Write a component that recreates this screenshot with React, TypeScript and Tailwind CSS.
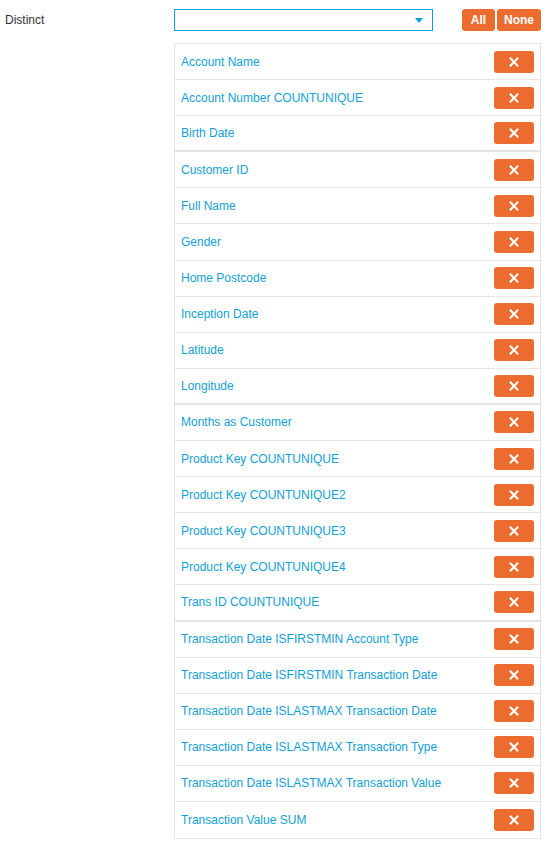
const fields = [
  'Account Name',
  'Account Number COUNTUNIQUE',
  'Birth Date',
  'Customer ID',
  'Full Name',
  'Gender',
  'Home Postcode',
  'Inception Date',
  'Latitude',
  'Longitude',
  'Months as Customer',
  'Product Key COUNTUNIQUE',
  'Product Key COUNTUNIQUE2',
  'Product Key COUNTUNIQUE3',
  'Product Key COUNTUNIQUE4',
  'Trans ID COUNTUNIQUE',
  'Transaction Date ISFIRSTMIN Account Type',
  'Transaction Date ISFIRSTMIN Transaction Date',
  'Transaction Date ISLASTMAX Transaction Date',
  'Transaction Date ISLASTMAX Transaction Type',
  'Transaction Date ISLASTMAX Transaction Value',
  'Transaction Value SUM',
]

// rows followed by a heavier divider
const groupEnds = [2, 9, 15]

function RemoveIcon() {
  return (
    <svg width="10" height="10" viewBox="0 0 10 10" fill="none">
      <path d="M1.6 1.6L8.4 8.4M8.4 1.6L1.6 8.4" stroke="white" strokeWidth="2.1" strokeLinecap="square" />
    </svg>
  )
}

export default function App() {
  return (
    <div className="w-[551px] h-[846px] bg-white font-[family-name:Liberation_Sans,Arial,sans-serif] text-[12px]">
      <div className="flex pt-[9px]">
        <div className="w-[174px] shrink-0 pl-[5px] pt-[2px] text-[#333] text-[12px]">Distinct</div>
        <div className="w-[367px] shrink-0">
          <div className="flex items-center gap-[2px]">
            <div className="w-[259px] shrink-0 h-[22px] border border-[#0aa1db] bg-white flex items-center justify-end pr-[9px]">
              <svg width="8" height="5" viewBox="0 0 8 5">
                <path d="M0 0H8L4 5Z" fill="#0aa1db" />
              </svg>
            </div>
            <button className="ml-[27px] shrink-0 h-[22px] w-[33px] rounded-[3px] bg-[#ec6c2f] text-white text-[12px] font-bold">All</button>
            <button className="shrink-0 h-[22px] w-[44px] rounded-[3px] bg-[#ec6c2f] text-white text-[12px] font-bold">None</button>
          </div>
          <div className="mt-[12px] border border-[#e4e4e4]">
            {fields.map((f, i) => (
              <div
                key={f}
                className={`flex items-center justify-between h-[36.1px] pl-[6px] pr-[6px] ${
                  i === fields.length - 1 ? '' : groupEnds.includes(i) ? 'border-b-2 border-[#e4e4e4]' : 'border-b border-[#e4e4e4]'
                }`}
              >
                <span className="text-[#119fd6] text-[12px]">{f}</span>
                <button className="w-[40px] h-[22px] rounded-[3px] bg-[#ec6c2f] flex items-center justify-center">
                  <RemoveIcon />
                </button>
              </div>
            ))}
          </div>
        </div>
      </div>
    </div>
  )
}
